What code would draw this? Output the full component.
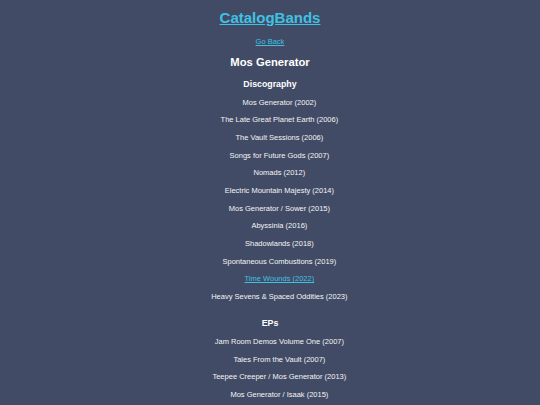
import React from 'react';

const albums = [
  'Mos Generator (2002)',
  'The Late Great Planet Earth (2006)',
  'The Vault Sessions (2006)',
  'Songs for Future Gods (2007)',
  'Nomads (2012)',
  'Electric Mountain Majesty (2014)',
  'Mos Generator / Sower (2015)',
  'Abyssinia (2016)',
  'Shadowlands (2018)',
  'Spontaneous Combustions (2019)',
  'Time Wounds (2022)',
  'Heavy Sevens & Spaced Oddities (2023)',
];

const eps = [
  'Jam Room Demos Volume One (2007)',
  'Tales From the Vault (2007)',
  'Teepee Creeper / Mos Generator (2013)',
  'Mos Generator / Isaak (2015)',
];

const Item: React.FC<{ title: string; active?: boolean }> = ({ title, active }) => (
  <li className="h-[17.7px] leading-[17.7px] text-[7.5px]">
    {active ? (
      <a href="#" className="text-[#3fc1e3] underline">{title}</a>
    ) : (
      <span className="text-[#f4f4f4]">{title}</span>
    )}
  </li>
);

const App: React.FC = () => {
  return (
    <div
      className="min-h-screen bg-[#424b65] text-center text-white"
      style={{ fontFamily: '"Liberation Sans", Arial, sans-serif' }}
    >
      <h1 className="h-[36px] leading-[36px] text-[15px] font-bold">
        <a href="#" className="text-[#3fc1e3] underline">CatalogBands</a>
      </h1>
      <div className="h-[12px] leading-[12px] text-[7.5px]">
        <a href="#" className="text-[#3fc1e3] underline">Go Back</a>
      </div>
      <h2 className="h-[28px] leading-[28px] text-[11.25px] font-bold">Mos Generator</h2>
      <h3 className="h-[17.5px] leading-[17.5px] text-[8.8px] font-bold">Discography</h3>
      <ul className="pl-[18.75px]">
        {albums.map(a => (
          <Item key={a} title={a} active={a === 'Time Wounds (2022)'} />
        ))}
      </ul>
      <h3 className="mt-[9.6px] h-[17.7px] leading-[17.7px] text-[8.8px] font-bold">EPs</h3>
      <ul className="pl-[18.75px]">
        {eps.map(e => (
          <Item key={e} title={e} />
        ))}
      </ul>
    </div>
  );
};

export default App;
